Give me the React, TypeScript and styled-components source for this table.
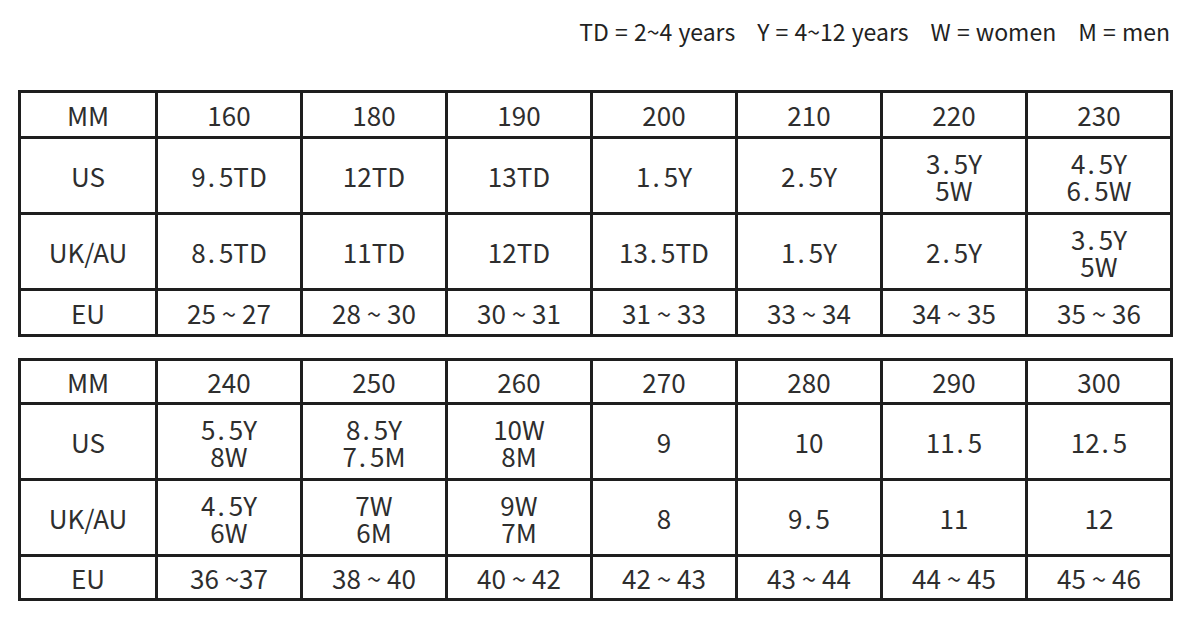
import React from "react";
import styled, { createGlobalStyle } from "styled-components";

type Row = { label: string; height: number; cells: string[][] };

const firstTable: Row[] = [
  { label: "MM", height: 46, cells: [["160"], ["180"], ["190"], ["200"], ["210"], ["220"], ["230"]] },
  {
    label: "US",
    height: 76,
    cells: [["9.5TD"], ["12TD"], ["13TD"], ["1.5Y"], ["2.5Y"], ["3.5Y", "5W"], ["4.5Y", "6.5W"]],
  },
  {
    label: "UK/AU",
    height: 76,
    cells: [["8.5TD"], ["11TD"], ["12TD"], ["13.5TD"], ["1.5Y"], ["2.5Y"], ["3.5Y", "5W"]],
  },
  {
    label: "EU",
    height: 46,
    cells: [["25 ~ 27"], ["28 ~ 30"], ["30 ~ 31"], ["31 ~ 33"], ["33 ~ 34"], ["34 ~ 35"], ["35 ~ 36"]],
  },
];

const secondTable: Row[] = [
  { label: "MM", height: 44, cells: [["240"], ["250"], ["260"], ["270"], ["280"], ["290"], ["300"]] },
  {
    label: "US",
    height: 76,
    cells: [["5.5Y", "8W"], ["8.5Y", "7.5M"], ["10W", "8M"], ["9"], ["10"], ["11.5"], ["12.5"]],
  },
  {
    label: "UK/AU",
    height: 76,
    cells: [["4.5Y", "6W"], ["7W", "6M"], ["9W", "7M"], ["8"], ["9.5"], ["11"], ["12"]],
  },
  {
    label: "EU",
    height: 44,
    cells: [["36 ~37"], ["38 ~ 40"], ["40 ~ 42"], ["42 ~ 43"], ["43 ~ 44"], ["44 ~ 45"], ["45 ~ 46"]],
  },
];

const legend = ["TD = 2~4 years", "Y = 4~12 years", "W = women", "M = men"];

const Value = ({ text }: { text: string }) => {
  const parts = text.split(".");
  if (parts.length < 2) return <>{text}</>;
  return (
    <>
      {parts[0]}
      <Dot>.</Dot>
      {parts[1]}
    </>
  );
};

const SizeTable = ({ rows }: { rows: Row[] }) => (
  <Table>
    <colgroup>
      <col style={{ width: 137 }} />
      {rows[0].cells.map((_, i) => (
        <col key={i} style={{ width: 145 }} />
      ))}
    </colgroup>
    <tbody>
      {rows.map((row) => (
        <Tr key={row.label} $height={row.height}>
          <Cell>{row.label}</Cell>
          {row.cells.map((lines, i) => (
            <Cell key={i}>
              {lines.map((line) => (
                <Line key={line}>
                  <Value text={line} />
                </Line>
              ))}
            </Cell>
          ))}
        </Tr>
      ))}
    </tbody>
  </Table>
);

const App = () => (
  <>
    <GlobalStyle />
    <Page>
      <Legend>
        {legend.map((item) => (
          <span key={item}>{item}</span>
        ))}
      </Legend>
      <Tables>
        <SizeTable rows={firstTable} />
        <SizeTable rows={secondTable} />
      </Tables>
    </Page>
  </>
);

export default App;

const GlobalStyle = createGlobalStyle`
  body {
    margin: 0;
    background: #fff;
    font-family: "Noto Sans CJK KR", "Noto Sans", sans-serif;
    color: #2b2b2b;
  }
`;

const Page = styled.div`
  width: 1188px;
  height: 620px;
  padding: 0 18px 0 18px;
  box-sizing: border-box;
`;

const Legend = styled.div`
  height: 62px;
  display: flex;
  justify-content: flex-end;
  align-items: center;
  gap: 22px;
  margin-bottom: 28px;
  font-size: 23px;
  line-height: 1;
  word-spacing: 1px;
  color: #222;
`;

const Tables = styled.div`
  display: flex;
  flex-direction: column;
  gap: 21px;
`;

const Table = styled.table`
  width: 1151px;
  border-collapse: collapse;
  table-layout: fixed;
  border: 3px solid #1e1e1e;
`;

const Tr = styled.tr<{ $height: number }>`
  height: ${(p) => p.$height}px;
`;

const Cell = styled.td`
  border: 3px solid #1e1e1e;
  padding: 0;
  text-align: center;
  vertical-align: middle;
  font-size: 26px;
  line-height: 1;
  color: #2e2e2e;
`;

const Line = styled.div`
  line-height: 27px;
`;

const Dot = styled.span`
  margin: 0 4px 0 2px;
`;
